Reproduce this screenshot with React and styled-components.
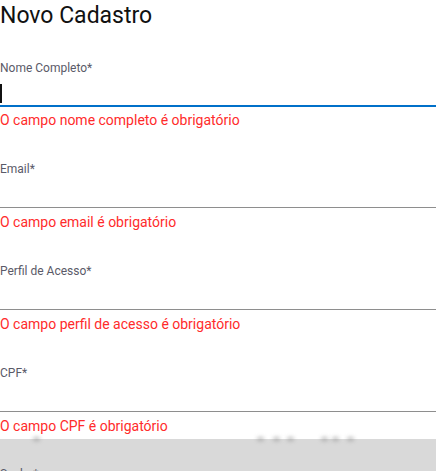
import styled, { createGlobalStyle } from "styled-components";

const Global = createGlobalStyle`
* { box-sizing: border-box; }
body {
    margin: 0;
    background: #fff;
    font-family: Roboto, "Liberation Sans", sans-serif;
    overflow: hidden;
}
`

const fields = [
    { label: "Nome Completo*", error: "O campo nome completo é obrigatório", focused: true },
    { label: "Email*", error: "O campo email é obrigatório" },
    { label: "Perfil de Acesso*", error: "O campo perfil de acesso é obrigatório" },
    { label: "CPF*", error: "O campo CPF é obrigatório" },
];

// blurred shapes peeking over the footer edge
const blobs = [33, 257, 273, 287, 321, 332, 347];

const App = () => {
    return (
        <Page>
            <Global />
            <Title>Novo Cadastro</Title>
            <Form>
                {fields.map((f, i) => (
                    <Field key={f.label} $first={i === 0}>
                        <Label>{f.label}</Label>
                        <InputWrap $focused={f.focused}>
                            {f.focused && <Caret />}
                        </InputWrap>
                        <Error>{f.error}</Error>
                    </Field>
                ))}
            </Form>
            <Footer>
                {blobs.map((x) => (
                    <Blob key={x} style={{ left: x }} />
                ))}
                <FooterLabel>Senha*</FooterLabel>
            </Footer>
        </Page>
    )
}

const Page = styled.div`
width: 436px;
height: 471px;
overflow: hidden;
`
const Title = styled.h1`
margin: 0;
padding-top: 2px;
font-size: 23px;
line-height: 28px;
font-weight: 400;
color: #111;
`
const Form = styled.div`
display: flex;
flex-direction: column;
`
const Field = styled.div`
display: flex;
flex-direction: column;
padding-top: ${(p) => (p.$first ? "30px" : "32px")};
`
const Label = styled.label`
font-size: 12px;
line-height: 16px;
color: #5a5a68;
`
const InputWrap = styled.div`
height: 31px;
display: flex;
align-items: center;
border-bottom: ${(p) => (p.$focused ? "2px solid #0070c9" : "1px solid #8e8e8e")};
margin-bottom: ${(p) => (p.$focused ? "0" : "1px")};
`
const Caret = styled.span`
width: 2px;
height: 19px;
margin-top: 6px;
background: #111;
`
const Error = styled.span`
font-size: 14px;
line-height: 18px;
margin-top: 4px;
color: #ff2b2b;
`
const Footer = styled.div`
margin-top: 4px;
height: 60px;
background: #d9d9d9;
position: relative;
padding-top: 27px;
`
const Blob = styled.span`
position: absolute;
top: -2px;
width: 7px;
height: 4px;
border-radius: 50%;
background: #888;
filter: blur(2px);
opacity: 0.6;
`
const FooterLabel = styled.div`
font-size: 12px;
line-height: 16px;
color: #5a5a68;
`

export default App;
